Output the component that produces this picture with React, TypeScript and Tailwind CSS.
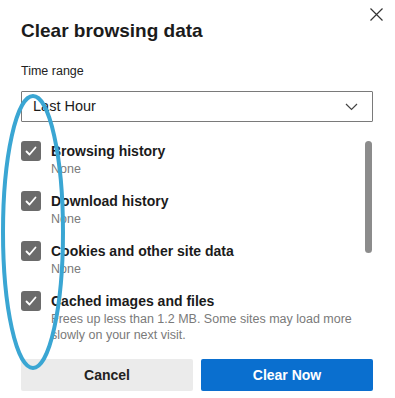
import React from 'react'

const items = [
  { label: 'Browsing history', desc: ['None'] },
  { label: 'Download history', desc: ['None'] },
  { label: 'Cookies and other site data', desc: ['None'] },
  {
    label: 'Cached images and files',
    desc: ['Frees up less than 1.2 MB. Some sites may load more', 'slowly on your next visit.'],
  },
]

function CheckBox() {
  return (
    <div className="w-[20px] h-[20px] shrink-0 rounded-[3px] bg-[#6b6b6b] flex items-center justify-center">
      <svg width="14" height="14" viewBox="0 0 14 14" fill="none">
        <path d="M2.5 7.5 L5.5 10.5 L11.5 3.5" stroke="#fff" strokeWidth="1.8" strokeLinecap="round" strokeLinejoin="round" />
      </svg>
    </div>
  )
}

export default function App() {
  return (
    <div className="relative w-[395px] h-[398px] bg-white overflow-hidden font-['Liberation_Sans',Arial,sans-serif] text-[#1b1b1b]">
      {/* close */}
      <button type="button" className="absolute left-[369px] top-[7px] w-[15px] h-[15px]">
        <svg width="15" height="15" viewBox="0 0 15 15" fill="none">
          <path d="M1.5 1.5 L13.5 13.5 M13.5 1.5 L1.5 13.5" stroke="#333" strokeWidth="1.2" />
        </svg>
      </button>

      <div className="pl-[21px] pr-[22px] pt-[18px]">
        <h1 className="text-[19px] leading-[25px] font-bold">Clear browsing data</h1>

        <div className="mt-[20px] text-[12.5px] leading-[16px] text-[#222]">Time range</div>

        {/* select */}
        <div className="mt-[12px] h-[31px] border-[1.5px] border-[#7a7a7a] rounded-[1px] flex items-center justify-between pl-[11px] pr-[14px]">
          <span className="text-[14.5px] text-[#1b1b1b]">Last Hour</span>
          <svg width="13" height="8" viewBox="0 0 13 8" fill="none">
            <path d="M1 1 L6.5 6.5 L12 1" stroke="#444" strokeWidth="1.2" />
          </svg>
        </div>

        {/* list + scrollbar */}
        <div className="mt-[19px] flex justify-between">
          <div className="flex flex-col">
            {items.map(item => (
              <div key={item.label} className="flex gap-[10px] h-[50px] last:h-auto">
                <CheckBox />
                <div className="flex flex-col">
                  <span className="text-[14px] leading-[20px] font-bold text-[#1b1b1b]">{item.label}</span>
                  {item.desc.map(line => (
                    <span key={line} className="text-[12.5px] leading-[16px] text-[#7a7a7a]">{line}</span>
                  ))}
                </div>
              </div>
            ))}
          </div>
          <div className="w-[7px] h-[112px] rounded-full bg-[#8c8c8c] mr-[1px]" />
        </div>

        {/* buttons */}
        <div className="mt-[16px] flex gap-[8px]">
          <button type="button" className="w-[172px] h-[32px] rounded-[2px] bg-[#ebebeb] text-[14px] font-bold text-[#222]">
            Cancel
          </button>
          <button type="button" className="w-[172px] h-[32px] rounded-[2px] bg-[#0a6fcf] text-[14px] font-bold text-white">
            Clear Now
          </button>
        </div>
      </div>

      {/* annotation ring */}
      <svg className="absolute left-0 top-0 pointer-events-none" width="395" height="398" viewBox="0 0 395 398" fill="none">
        <ellipse cx="33" cy="232" rx="30" ry="136" stroke="#3aa6d3" strokeWidth="4" />
      </svg>
    </div>
  )
}
